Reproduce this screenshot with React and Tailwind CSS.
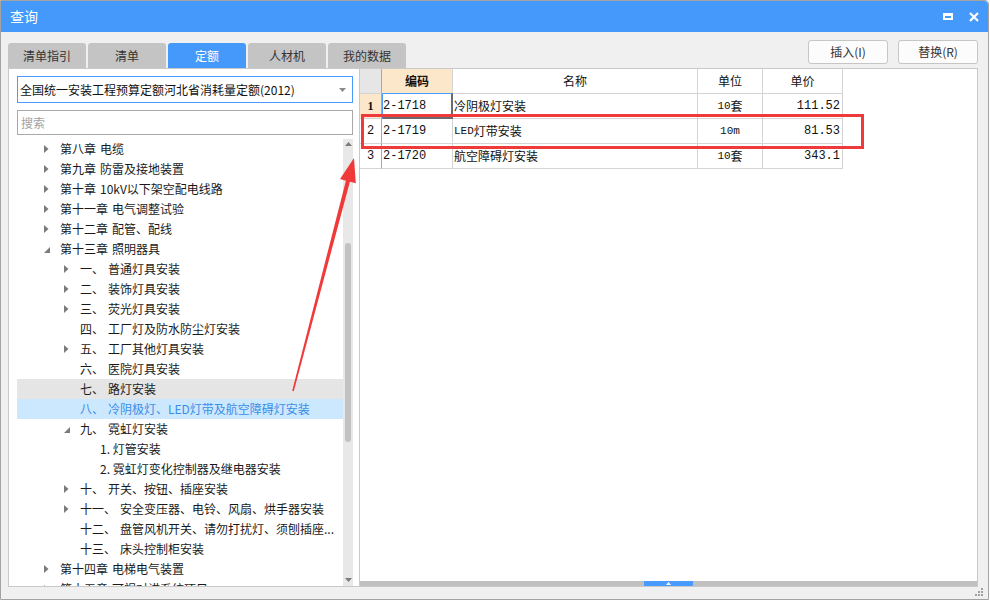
import React from 'react';

const ui = "font-['Noto_Sans_CJK_SC','Noto_Sans',sans-serif]";
const mono = "font-['Liberation_Mono','Noto_Sans_CJK_SC',monospace]";

const tabs = ['清单指引', '清单', '定额', '人材机', '我的数据'];

const tree = [
  { level: 0, num: '第八章', label: '电缆', icon: 'closed' },
  { level: 0, num: '第九章', label: '防雷及接地装置', icon: 'closed' },
  { level: 0, num: '第十章', label: '10kV以下架空配电线路', icon: 'closed' },
  { level: 0, num: '第十一章', label: '电气调整试验', icon: 'closed' },
  { level: 0, num: '第十二章', label: '配管、配线', icon: 'closed' },
  { level: 0, num: '第十三章', label: '照明器具', icon: 'open' },
  { level: 1, num: '一、', label: '普通灯具安装', icon: 'closed' },
  { level: 1, num: '二、', label: '装饰灯具安装', icon: 'closed' },
  { level: 1, num: '三、', label: '荧光灯具安装', icon: 'closed' },
  { level: 1, num: '四、', label: '工厂灯及防水防尘灯安装' },
  { level: 1, num: '五、', label: '工厂其他灯具安装', icon: 'closed' },
  { level: 1, num: '六、', label: '医院灯具安装' },
  { level: 1, num: '七、', label: '路灯安装', state: 'hover' },
  { level: 1, num: '八、', label: '冷阴极灯、LED灯带及航空障碍灯安装', state: 'selected' },
  { level: 1, num: '九、', label: '霓虹灯安装', icon: 'open' },
  { level: 2, num: '1.', label: '灯管安装' },
  { level: 2, num: '2.', label: '霓虹灯变化控制器及继电器安装' },
  { level: 1, num: '十、', label: '开关、按钮、插座安装', icon: 'closed' },
  { level: 1, num: '十一、', label: '安全变压器、电铃、风扇、烘手器安装', icon: 'closed' },
  { level: 1, num: '十二、', label: '盘管风机开关、请勿打扰灯、须刨插座...' },
  { level: 1, num: '十三、', label: '床头控制柜安装' },
  { level: 0, num: '第十四章', label: '电梯电气装置', icon: 'closed' },
  { level: 0, num: '第十五章', label: '可视对讲系统项目', icon: 'closed' },
];

const indent = ['pl-[27px]', 'pl-[47px]', 'pl-[67px]'];

const rows = [
  { n: '1', code: '2-1718', name: '冷阴极灯安装', unit: '10套', price: '111.52' },
  { n: '2', code: '2-1719', name: 'LED灯带安装', unit: '10m', price: '81.53' },
  { n: '3', code: '2-1720', name: '航空障碍灯安装', unit: '10套', price: '343.1' },
];

function TreeIcon({ type }) {
  if (type === 'closed') {
    return (
      <svg width="5" height="8" viewBox="0 0 5 8">
        <polygon points="0,0 4.5,4 0,8" fill="#7b7b7b" />
      </svg>
    );
  }
  if (type === 'open') {
    return (
      <svg width="6" height="6" viewBox="0 0 6 6" className="mt-[2px]">
        <polygon points="6,0 6,6 0,6" fill="#7b7b7b" />
      </svg>
    );
  }
  return null;
}

function TreeRow({ item }) {
  const bg =
    item.state === 'hover' ? 'bg-[#e5e5e5]' : item.state === 'selected' ? 'bg-[#cce8ff]' : '';
  const color = item.state === 'selected' ? 'text-[#3a8ee6]' : 'text-[#1a1a1a]';
  return (
    <div className={`h-5 flex items-center whitespace-nowrap text-[12px] leading-5 ${indent[item.level]} ${bg} ${color}`}>
      <div className="w-4 flex items-center shrink-0">
        <TreeIcon type={item.icon} />
      </div>
      {item.level === 2 ? (
        <span>
          {item.num} {item.label}
        </span>
      ) : (
        <>
          <span>{item.num}</span>
          <span className="ml-[4px]">{item.label}</span>
        </>
      )}
    </div>
  );
}

function TitleBar() {
  return (
    <div className="h-[31px] bg-[#4599fb] flex items-center justify-between pl-[9px] pr-[9px] rounded-tr-[4px]">
      <span className="text-white text-[14px]">查询</span>
      <div className="flex items-center gap-[16px]">
        <div className="w-[10px] h-[7px] border-2 border-t-[3px] border-white" />
        <svg width="10" height="10" viewBox="0 0 10 10">
          <path d="M1 1 L9 9 M9 1 L1 9" stroke="white" strokeWidth="2.2" />
        </svg>
      </div>
    </div>
  );
}

function Toolbar() {
  return (
    <div className="h-[36px] flex justify-between pl-[7px] pr-[10px]">
      <div className="flex gap-[2px] pt-[11px]">
        {tabs.map((t) => (
          <div
            key={t}
            className={`w-[78px] h-[25px] rounded-t-[3px] flex items-center justify-center text-[12px] ${
              t === '定额' ? 'bg-[#4599fb] text-white' : 'bg-[#c4c4c4] text-[#333]'
            }`}
          >
            {t}
          </div>
        ))}
      </div>
      <div className="flex gap-[10px] pt-[8px]">
        <button className="w-[80px] h-[24px] bg-[#fcfcfc] border border-[#c6c6c6] rounded-[3px] text-[12px] text-[#333]">
          插入(I)
        </button>
        <button className="w-[80px] h-[24px] bg-[#fcfcfc] border border-[#c6c6c6] rounded-[3px] text-[12px] text-[#333]">
          替换(R)
        </button>
      </div>
    </div>
  );
}

function LeftPane() {
  return (
    <div className="w-[344px] flex flex-col pl-[8px]">
      <div className="mt-[7px] h-[27px] border border-[#4a9bff] flex items-center justify-between pl-[2px] pr-[6px]">
        <span className="text-[12px] text-[#111] whitespace-nowrap">全国统一安装工程预算定额河北省消耗量定额(2012)</span>
        <svg width="7" height="4" viewBox="0 0 7 4">
          <polygon points="0,0 7,0 3.5,4" fill="#8a8a8a" />
        </svg>
      </div>
      <div className="mt-[7px] h-[25px] border border-[#a9a9a9] flex items-center pl-[3px]">
        <span className="text-[12px] text-[#a3a3a3]">搜索</span>
      </div>
      <div className="mt-[4px] flex-1 min-h-0 flex">
        <div className="flex-1 overflow-hidden">
          {tree.map((item) => (
            <TreeRow key={item.num + item.label} item={item} />
          ))}
        </div>
        <div className="w-[10px] bg-[#e8e8e8] flex flex-col items-center">
          <svg width="7" height="4" viewBox="0 0 7 4" className="mt-[3px]">
            <polygon points="3.5,0 7,4 0,4" fill="#7b7b7b" />
          </svg>
          <div className="mt-[97px] w-[6px] h-[199px] rounded-[3px] bg-[#c2c2c2]" />
          <div className="flex-1" />
          <svg width="7" height="4" viewBox="0 0 7 4" className="mb-[4px]">
            <polygon points="0,0 7,0 3.5,4" fill="#7b7b7b" />
          </svg>
        </div>
      </div>
    </div>
  );
}

function RightPane() {
  const cell = 'border-r border-b border-[#d4d4d4] flex items-center text-[12px] text-[#111]';
  return (
    <div className="flex-1 flex flex-col relative">
      <div className="grid grid-cols-[22px_71px_245px_65px_80px] w-[483px]">
        <div className={`${cell} h-[25px] bg-[#e6e6e6] border-r-[#a8a8a8]`} />
        <div className={`${cell} h-[25px] bg-[#fde7ca] justify-center font-bold`}>编码</div>
        <div className={`${cell} h-[25px] justify-center`}>名称</div>
        <div className={`${cell} h-[25px] justify-center`}>单位</div>
        <div className={`${cell} h-[25px] justify-center`}>单价</div>
        {rows.map((r, i) => (
          <React.Fragment key={r.code}>
            <div
              className={`${cell} h-[25px] justify-center border-r-[#a8a8a8] ${mono} text-[11px] ${
                i === 0 ? "bg-[#fde7ca] font-bold font-['Liberation_Serif',serif] text-[12px]" : ''
              }`}
            >
              {r.n}
            </div>
            <div className={`${cell} h-[25px] pl-[1px] ${mono} text-[11px] relative`}>
              {r.code}
              {i === 0 && (
                <div className="absolute -top-px left-0 -right-px -bottom-px border-t border-l border-t-[#4a9bff] border-l-[#4a9bff] border-r-2 border-b-2 border-r-[#6b6b6b] border-b-[#6b6b6b]" />
              )}
            </div>
            <div className={`${cell} h-[25px] pl-[1px]`}>
              {r.name.startsWith('LED') ? (
                <>
                  <span className={`${mono} text-[11px]`}>LED</span>
                  <span>{r.name.slice(3)}</span>
                </>
              ) : (
                r.name
              )}
            </div>
            <div className={`${cell} h-[25px] justify-center`}>
              <span className={`${mono} text-[11px]`}>{r.unit.replace('套', '')}</span>
              {r.unit.includes('套') && <span>套</span>}
            </div>
            <div className={`${cell} h-[25px] justify-end pr-[2px] ${mono} text-[11px]`}>{r.price}</div>
          </React.Fragment>
        ))}
      </div>
      <div className="flex-1" />
      <div className="h-[5px] bg-[#c0c0c0] flex">
        <div className="ml-[284px] w-[49px] h-[5px] bg-[#4a9bff] flex items-center justify-center">
          <svg width="5" height="3" viewBox="0 0 5 3">
            <polygon points="2.5,0 5,3 0,3" fill="white" />
          </svg>
        </div>
      </div>
      <div className="absolute left-[1px] top-[45px] w-[503px] h-[35px] border-[3px] border-[#ee3a3a]" />
    </div>
  );
}

export default function App() {
  return (
    <div className={`relative w-[990px] h-[600px] bg-white overflow-hidden ${ui}`}>
      <div className="w-[989px] h-[600px] flex flex-col border border-[#a3a3a3] bg-[#f0f0f0] rounded-tr-[4px]">
        <TitleBar />
        <Toolbar />
        <div className="ml-[7px] w-[970px] h-[519px] flex border border-[#c9c9c9] bg-white">
          <LeftPane />
          <div className="w-[6px]" />
          <div className="w-px bg-[#c9c9c9]" />
          <RightPane />
        </div>
        <div className="flex-1 relative">
          <svg width="9" height="8" viewBox="0 0 9 8" className="absolute right-[4px] bottom-[3px]">
            <rect x="6" y="0" width="2" height="2" fill="#a0a0a0" />
            <rect x="3" y="3" width="2" height="2" fill="#a0a0a0" />
            <rect x="6" y="3" width="2" height="2" fill="#a0a0a0" />
            <rect x="0" y="6" width="2" height="2" fill="#a0a0a0" />
            <rect x="3" y="6" width="2" height="2" fill="#a0a0a0" />
            <rect x="6" y="6" width="2" height="2" fill="#a0a0a0" />
          </svg>
        </div>
      </div>
      <svg className="absolute left-0 top-0 pointer-events-none" width="990" height="600">
        <polygon
          points="354,158 355.8,183.3 349.9,181.8 293.8,391.2 292.2,390.8 345.9,180.7 340,179.1"
          fill="#f03a3a"
        />
      </svg>
    </div>
  );
}
